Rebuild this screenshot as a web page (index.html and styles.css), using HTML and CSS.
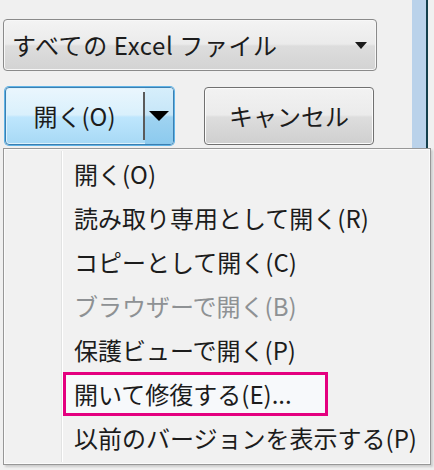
FILE: index.html
```html
<!DOCTYPE html>
<html lang="ja">
<head>
<meta charset="utf-8">
<link rel="stylesheet" href="styles.css">
</head>
<body>
<div class="dialog">
  <div class="content">
    <div class="combo">
      <span class="combo-text">すべての Excel ファイル</span>
      <span class="combo-arrow"></span>
    </div>
    <div class="buttons">
      <div class="split-btn">
        <span class="split-main">開く(O)</span>
        <span class="split-div"></span>
        <span class="split-drop"><span class="tri"></span></span>
      </div>
      <div class="btn">キャンセル</div>
    </div>
  </div>
  <div class="sidebar"></div>

  <div class="menu">
    <div class="gutter"></div>
    <ul class="items">
      <li class="item">開く(O)</li>
      <li class="item">読み取り専用として開く(R)</li>
      <li class="item">コピーとして開く(C)</li>
      <li class="item disabled">ブラウザーで開く(B)</li>
      <li class="item">保護ビューで開く(P)</li>
      <li class="item marked">開いて修復する(E)...</li>
      <li class="item">以前のバージョンを表示する(P)</li>
    </ul>
  </div>
</div>
</body>
</html>
```

FILE: styles.css
```css
html, body {
  margin: 0;
  padding: 0;
}
body {
  width: 434px;
  height: 470px;
  overflow: hidden;
  background: #f0f0f0;
  font-family: "Noto Sans CJK JP", "Noto Sans", sans-serif;
  font-size: 24px;
  color: #1c1c1c;
}
.dialog {
  position: relative;
  display: flex;
  height: 470px;
}
.content {
  width: 412px;
  padding-top: 19px;
  box-sizing: border-box;
}
.combo {
  margin-left: 3px;
  width: 374px;
  height: 52px;
  box-sizing: border-box;
  border: 1px solid #8a8a8a;
  border-radius: 4px;
  box-shadow: inset 0 0 0 1px #f7f7f7;
  background: linear-gradient(#f3f3f3 0%, #ebebeb 48%, #dddddd 52%, #d3d3d3 100%);
  display: flex;
  align-items: center;
  justify-content: space-between;
  padding: 0 9px 0 8px;
}
.combo-text {
  line-height: 1;
  letter-spacing: 0.6px;
}
.combo-arrow {
  width: 0;
  height: 0;
  border-left: 6px solid transparent;
  border-right: 6px solid transparent;
  border-top: 7px solid #1a1a1a;
}
.buttons {
  display: flex;
  margin-top: 16px;
  padding-left: 5px;
  gap: 30px;
}
.split-btn {
  width: 169px;
  height: 58px;
  box-sizing: border-box;
  border: 1px solid #3c7fb1;
  border-radius: 4px;
  box-shadow: inset 0 0 0 1px #def2fc, 0 0 0 1px #5fb3e6;
  background: linear-gradient(#eaf6fd 0%, #d9f0fc 48%, #bee6fd 52%, #a7d9f5 100%);
  display: flex;
  align-items: center;
}
.split-main {
  width: 137px;
  text-align: center;
  line-height: 1;
}
.split-div {
  width: 2px;
  align-self: stretch;
  margin: 4px 0;
  background: #5a5a5a;
}
.split-drop {
  flex: 1;
  align-self: stretch;
  display: flex;
  align-items: center;
  justify-content: center;
  background: linear-gradient(#d6eefb 0%, #c6e6f8 48%, #9fd3f1 52%, #8ccaee 100%);
  border-radius: 0 3px 3px 0;
}
.tri {
  width: 0;
  height: 0;
  border-left: 10px solid transparent;
  border-right: 10px solid transparent;
  border-top: 10px solid #000;
}
.btn {
  width: 170px;
  height: 58px;
  box-sizing: border-box;
  border: 1px solid #707070;
  border-radius: 4px;
  box-shadow: inset 0 0 0 1px #fbfbfb;
  background: linear-gradient(#f2f2f2 0%, #ebebeb 48%, #dddddd 52%, #cfcfcf 100%);
  display: flex;
  align-items: center;
  justify-content: center;
  line-height: 1;
}
.sidebar {
  width: 14px;
  height: 148px;
  background: #bad2ea;
  border-right: 2px solid #143f4c;
}
.menu {
  position: absolute;
  left: 3px;
  top: 148px;
  width: 428px;
  height: 317px;
  box-sizing: border-box;
  border: 1px solid #979797;
  box-shadow: inset 0 0 0 1px #fbfbfb, 2px 2px 2px rgba(0,0,0,0.15);
  background: #f1f1f1;
  display: flex;
}
.gutter {
  width: 57px;
  margin: 2px 0 2px 0;
  border-right: 1px solid #e2e3e3;
  box-shadow: 1px 0 0 #ffffff;
}
.items {
  list-style: none;
  margin: 0;
  padding: 3px 0 0 1px;
  flex: 1;
}
.item {
  height: 44px;
  box-sizing: border-box;
  padding-left: 11px;
  line-height: 44px;
  white-space: nowrap;
}
.item.disabled {
  color: #8e9194;
}
.item.marked {
  width: 265px;
  border: 3px solid #e4007f;
  background: #f7f9fb;
  padding-left: 8px;
  line-height: 38px;
}
```
